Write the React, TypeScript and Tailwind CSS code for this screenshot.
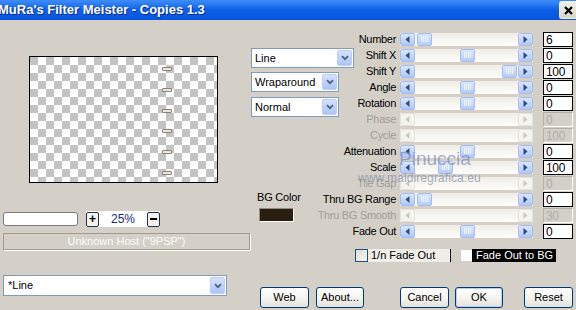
import React from 'react';

type Row = { label: string; value: string; pos?: number; disabled?: boolean };

const rows: Row[] = [
  { label: 'Number', value: '6', pos: 2 },
  { label: 'Shift X', value: '0', pos: 45 },
  { label: 'Shift Y', value: '100', pos: 87 },
  { label: 'Angle', value: '0', pos: 45 },
  { label: 'Rotation', value: '0', pos: 45 },
  { label: 'Phase', value: '0', disabled: true },
  { label: 'Cycle', value: '100', disabled: true },
  { label: 'Attenuation', value: '0', pos: 45 },
  { label: 'Scale', value: '100', pos: 23 },
  { label: 'Tile Gap', value: '0', disabled: true },
  { label: 'Thru BG Range', value: '0', pos: 2 },
  { label: 'Thru BG Smooth', value: '30', disabled: true },
  { label: 'Fade Out', value: '0', pos: 45 },
];

function ArrowBtn({ dir, disabled }: { dir: 'left' | 'right'; disabled?: boolean }) {
  return (
    <div
      className={`flex h-full w-[15px] shrink-0 items-center justify-center rounded-[2px] border ${
        disabled ? 'border-[#e4e2da] bg-[#f5f4ef]' : 'border-[#a7bcea] bg-gradient-to-b from-[#dbe6fe] to-[#b2c7f6]'
      }`}
    >
      <svg width="5" height="7" viewBox="0 0 5 7">
        <path d={dir === 'left' ? 'M4.5 0 L0.5 3.5 L4.5 7Z' : 'M0.5 0 L4.5 3.5 L0.5 7Z'} fill={disabled ? '#cac7be' : '#2d4a8a'} />
      </svg>
    </div>
  );
}

function Thumb() {
  return (
    <div className="flex h-full w-[15px] shrink-0 items-center justify-center gap-[1px] rounded-[2px] border border-[#a7bcea] bg-gradient-to-b from-[#dbe6fe] to-[#b7cbf7]">
      {[0, 1, 2, 3].map(i => (
        <div key={i} className="h-[6px] w-px bg-[#f4f7ff]" />
      ))}
    </div>
  );
}

function Slider({ row }: { row: Row }) {
  return (
    <div className="flex h-[16px] items-center">
      <div
        className={`flex w-[41px] justify-end whitespace-nowrap text-[11px] leading-[14px] tracking-[-0.3px] ${
          row.disabled ? 'text-[#a19e96]' : 'text-black'
        }`}
      >
        {row.label}
      </div>
      <div className="ml-[4px] flex h-[13px] w-[133px] bg-gradient-to-b from-[#efede6] to-[#fdfdfb]">
        <ArrowBtn dir="left" disabled={row.disabled} />
        <div className="flex flex-1">
          {row.pos !== undefined && (
            <>
              <div style={{ width: row.pos }} />
              <Thumb />
            </>
          )}
        </div>
        <ArrowBtn dir="right" disabled={row.disabled} />
      </div>
      <div
        className={`ml-[10px] h-[15px] w-[30px] pl-[2px] text-[12px] leading-[14px] tracking-[-0.3px] ${
          row.disabled
            ? 'border border-[#b3b0a8] border-b-white border-r-white text-[#b0ada5]'
            : 'border border-black bg-white text-black'
        }`}
      >
        {row.value}
      </div>
    </div>
  );
}

function Combo({ text, w }: { text: string; w: string }) {
  return (
    <div className={`flex h-[20px] items-center border border-[#7f9db9] bg-white ${w}`}>
      <span className="flex-1 pl-[3px] text-[11px] leading-[14px]">{text}</span>
      <div className="mr-[1px] flex h-[16px] w-[15px] items-center justify-center rounded-[2px] border border-[#bccdf3] bg-gradient-to-b from-[#d5e1fd] to-[#aec4f5]">
        <svg width="8" height="6" viewBox="0 0 8 6">
          <path d="M1 1.2 L4 4.2 L7 1.2" stroke="#4d6185" strokeWidth="1.8" fill="none" />
        </svg>
      </div>
    </div>
  );
}

function Btn({ label, w, ml, def }: { label: string; w: string; ml: string; def?: boolean }) {
  return (
    <div
      className={`flex h-[21px] items-center justify-center rounded-[3px] border border-[#003c74] bg-gradient-to-b from-white via-[#f6f5f1] to-[#e3e1d9] text-[11px] text-black ${w} ${ml} ${
        def ? 'shadow-[inset_0_0_0_1px_#b9d0f5]' : ''
      }`}
    >
      {label}
    </div>
  );
}

export default function App() {
  return (
    <div className="relative h-[310px] w-[576px] overflow-hidden bg-[#d4d0c8] font-['Liberation_Sans',Arial,sans-serif] text-black">
      {/* title bar */}
      <div className="flex h-[20px] items-start bg-gradient-to-b from-[#3f8df8] via-[#0b5fe7] to-[#0a55de]">
        <span className="ml-[-2px] mt-[2px] text-[13px] font-bold leading-[16px] text-white [text-shadow:1px_1px_#0b2a8c]">
          MuRa's Filter Meister - Copies 1.3
        </span>
        <div className="ml-auto mt-[1px] flex h-[18px] w-[17px] items-center justify-center rounded-l-[3px] border border-r-0 border-[#f4f1e8] bg-gradient-to-b from-[#f3f0e6] to-[#d9d5c8]">
          <svg width="9" height="9" viewBox="0 0 9 9">
            <path d="M1 1 L8 8 M8 1 L1 8" stroke="#000" strokeWidth="2.2" />
          </svg>
        </div>
      </div>

      <div className="flex">
        {/* left column */}
        <div className="flex w-[251px] flex-col">
          <div className="ml-[29px] mt-[36px] flex h-[127px] w-[189px] flex-col justify-between border border-black bg-[conic-gradient(#fff_25%,#c3c3c3_0_50%,#fff_0_75%,#c3c3c3_0)] bg-[length:16px_16px] pb-[7px] pt-[10px]">
            {[0, 1, 2, 3, 4, 5].map(i => (
              <div key={i} className="ml-[132px] h-[4px] w-[10px] rounded-[1px] border border-[#8a8275] bg-[#ebe7df]" />
            ))}
          </div>
          <div className="mt-[28px] flex h-[16px] items-center">
            <div className="ml-[3px] h-[14px] w-[75px] rounded-[3px] border border-[#7a7a7a] bg-white" />
            <div className="ml-[8px] flex h-[16px] w-[74px] items-center bg-white">
              <div className="flex h-[15px] w-[13px] items-center justify-center rounded-[2px] border border-[#23324a] bg-[#f2f1ec] text-[12px] font-bold leading-none">
                +
              </div>
              <span className="flex-1 text-center text-[12px] text-[#18287a]">25%</span>
              <div className="flex h-[15px] w-[13px] items-center justify-center rounded-[2px] border border-[#23324a] bg-[#f2f1ec]">
                <div className="h-[1.5px] w-[7px] bg-black" />
              </div>
            </div>
          </div>
          <div className="ml-[3px] mt-[6px] flex h-[17px] w-[247px] items-center justify-center border border-[#a09d95] text-[11px] text-[#fbfbfb] shadow-[1px_1px_0_#ffffff]">
            Unknown Host ("9PSP")
          </div>
        </div>

        {/* middle column */}
        <div className="flex w-[104px] flex-col">
          <div className="mt-[28px]">
            <Combo text="Line" w="w-[103px]" />
          </div>
          <div className="mt-[4px]">
            <Combo text="Wraparound" w="w-[88px]" />
          </div>
          <div className="mt-[5px]">
            <Combo text="Normal" w="w-[88px]" />
          </div>
          <span className="ml-[6px] mt-[73px] text-[11px] leading-[14px] tracking-[-0.2px]">BG Color</span>
          <div className="ml-[8px] mt-[4px] h-[14px] w-[35px] border border-[#8f8b82] border-b-white border-r-white bg-[#2a1f0f]" />
        </div>

        {/* right column */}
        <div className="flex flex-col">
          <div className="mt-[11px] flex flex-col">
            {rows.map(r => (
              <Slider key={r.label} row={r} />
            ))}
          </div>
          <div className="mt-[10px] flex h-[13px] items-center">
            <div className="h-[13px] w-[13px] border border-[#1c5180] bg-gradient-to-br from-[#dcdbd5] to-[#f7f6f2]" />
            <div className="flex h-[13px] w-[82px] items-center bg-[#efeee9] pl-[3px] text-[11px]">1/n Fade Out</div>
            <div className="h-[13px] w-px bg-black" />
            <div className="ml-[10px] h-[11px] w-[11px] bg-white" />
            <div className="flex h-[13px] w-[84px] items-center bg-black pl-[4px] text-[11px] text-white">Fade Out to BG</div>
          </div>
        </div>
      </div>

      {/* bottom row */}
      <div className="flex items-start">
        <div className="ml-[3px] mt-[13px] flex h-[21px] w-[224px] items-center border border-[#7f9db9] bg-white">
          <span className="flex-1 pl-[4px] text-[11px]">*Line</span>
          <div className="mr-[1px] flex h-[17px] w-[15px] items-center justify-center rounded-[2px] border border-[#bccdf3] bg-gradient-to-b from-[#d5e1fd] to-[#aec4f5]">
            <svg width="8" height="6" viewBox="0 0 8 6">
              <path d="M1 1.2 L4 4.2 L7 1.2" stroke="#4d6185" strokeWidth="1.8" fill="none" />
            </svg>
          </div>
        </div>
        <div className="mt-[25px] flex">
          <Btn label="Web" w="w-[49px]" ml="ml-[33px]" />
          <Btn label="About..." w="w-[48px]" ml="ml-[7px]" />
          <Btn label="Cancel" w="w-[49px]" ml="ml-[36px]" />
          <Btn label="OK" w="w-[48px]" ml="ml-[6px]" def />
          <Btn label="Reset" w="w-[49px]" ml="ml-[21px]" />
        </div>
      </div>

      {/* watermark */}
      <div className="pointer-events-none absolute left-[399px] top-[148px] text-[19px] leading-[22px] text-[#7c8db8]/70">Pinuccia</div>
      <div className="pointer-events-none absolute left-[358px] top-[171px] text-[12px] leading-[14px] tracking-[0.1px] text-[#7c89a8]/70">
        www.maldiregrafica.eu
      </div>
    </div>
  );
}
